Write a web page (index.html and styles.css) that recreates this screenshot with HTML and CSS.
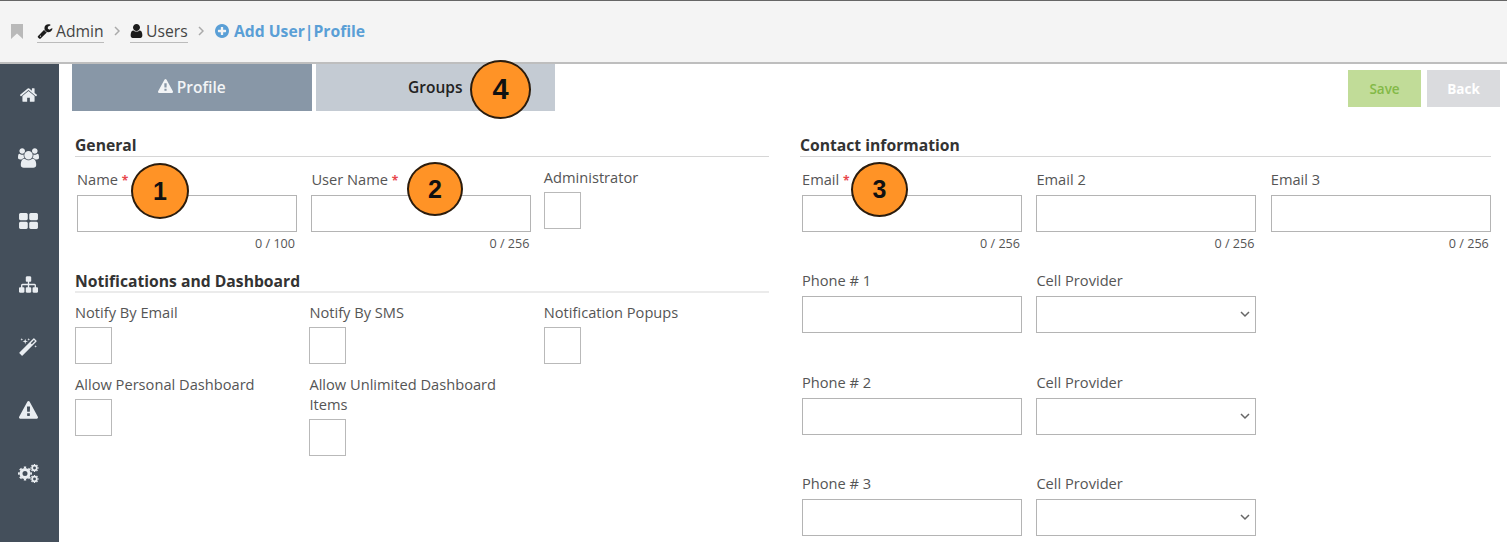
FILE: index.html
```html
<!DOCTYPE html>
<html lang="en">
<head>
<meta charset="utf-8">
<title>Add User | Profile</title>
<link rel="stylesheet" href="styles.css">
</head>
<body>
<svg class="sprite" aria-hidden="true">
  <symbol id="warning" viewBox="0 0 1792 1792"><path d="M1024 1375v-190q0-14-9.5-23.5t-22.5-9.5h-192q-13 0-22.5 9.5t-9.5 23.5v190q0 14 9.5 23.5t22.5 9.5h192q13 0 22.5-9.5t9.5-23.5zm-2-374l18-459q0-12-10-19-13-11-24-11h-220q-11 0-24 11-10 7-10 21l17 457q0 10 10 16.5t24 6.5h185q14 0 23.5-6.5t10.5-16.5zm-14-934l768 1408q35 63-2 126-17 29-46.5 46t-63.5 17h-1536q-34 0-63.5-17t-46.5-46q-37-63-2-126l768-1408q17-31 47-49t65-18 65 18 47 49z"/></symbol>
</svg>
<div class="page">
  <header class="topbar">
    <svg class="bookmark" viewBox="0 0 12 15"><path d="M0 0h12v15l-6-5.500-6 5.500z"/></svg>
    <a class="crumb crumb-admin"><svg class="ico" viewBox="0 0 1792 1792"><path d="M448 1472q0-26-19-45t-45-19-45 19-19 45 19 45 45 19 45-19 19-45zm644-420l-682 682q-37 37-90 37-52 0-91-37l-106-108q-38-36-38-90 0-53 38-91l681-681q39 98 114.500 173.500t173.500 114.500zm634-435q0 39-23 106-47 134-164.500 217.500t-258.500 83.500q-185 0-316.500-131.500t-131.500-316.500 131.500-316.500 316.500-131.500q58 0 121.500 16.500t107.500 46.500q16 11 16 28t-16 28l-293 169v224l193 107q5-3 79-48.500t135.500-81 70.500-35.500q15 0 23.500 10t8.500 25z"/></svg><span>Admin</span></a>
    <svg class="sep" viewBox="0 0 6 10"><path d="M1 1l4 4-4 4"/></svg>
    <a class="crumb crumb-users"><svg class="ico" viewBox="192 128 1408 1536"><path d="M1536 1399q0 109-62.500 187t-150.500 78h-854q-88 0-150.500-78t-62.500-187q0-85 8.500-160.500t31.500-152 58.500-131 94-89 134.500-34.500q131 128 313 128t313-128q76 0 134.500 34.500t94 89 58.500 131 31.500 152 8.500 160.500zm-256-887q0 159-112.500 271.500t-271.500 112.500-271.500-112.500-112.500-271.500 112.500-271.500 271.500-112.500 271.500 112.500 112.500 271.500z"/></svg><span>Users</span></a>
    <svg class="sep" viewBox="0 0 6 10"><path d="M1 1l4 4-4 4"/></svg>
    <span class="current"><svg class="ico" viewBox="128 128 1536 1536"><path d="M1344 960v-128q0-26-19-45t-45-19h-256v-256q0-26-19-45t-45-19h-128q-26 0-45 19t-19 45v256h-256q-26 0-45 19t-19 45v128q0 26 19 45t45 19h256v256q0 26 19 45t45 19h128q26 0 45-19t19-45v-256h256q26 0 45-19t19-45zm320-64q0 209-103 385.500t-279.500 279.500-385.500 103-385.500-103-279.500-279.500-103-385.500 103-385.500 279.500-279.500 385.500-103 385.500 103 279.500 279.500 103 385.500z"/></svg><span>Add User|Profile</span></span>
  </header>
  <div class="body">
    <nav class="side">
      <a><svg class="i-home" viewBox="90 240 1612 1300"><path d="M1472 992v480q0 26-19 45t-45 19h-384v-384h-256v384h-384q-26 0-45-19t-19-45v-480q0-1 .5-3t.5-3l575-474 575 474q1 2 1 6zm223-69l-62 74q-8 9-21 11h-3q-13 0-21-7l-692-577-692 577q-12 8-24 7-13-2-21-11l-62-74q-8-10-7-23.500t11-21.500l719-599q32-26 76-26t76 26l244 204v-195q0-14 9-23t23-9h192q14 0 23 9t9 23v408l219 182q10 8 11 21.500t-7 23.500z"/></svg></a>
      <a><svg class="i-users" viewBox="0 0 1920 1792"><path d="M593 896q-162 5-265 128h-134q-82 0-138-40.500t-56-118.500q0-353 124-353 6 0 43.500 21t97.500 42.500 119 21.500q67 0 133-23-5 37-5 66 0 139 81 256zm1071 637q0 120-73 189.500t-194 69.500h-874q-121 0-194-69.500t-73-189.500q0-53 3.500-103.500t14-109 26.500-108.500 43-97.500 62-81 85.500-53.500 111.500-20q10 0 43 21.500t73 48 107 48 135 21.500 135-21.500 107-48 73-48 43-21.500q61 0 111.500 20t85.500 53.500 62 81 43 97.500 26.500 108.500 14 109 3.500 103.500zm-1024-1277q0 106-75 181t-181 75-181-75-75-181 75-181 181-75 181 75 75 181zm704 384q0 159-112.500 271.500t-271.500 112.500-271.500-112.500-112.500-271.500 112.500-271.500 271.500-112.500 271.500 112.500 112.500 271.500zm576 225q0 78-56 118.500t-138 40.500h-134q-103-123-265-128 81-117 81-256 0-29-5-66 66 23 133 23 59 0 119-21.500t97.500-42.500 43.500-21q124 0 124 353zm-128-609q0 106-75 181t-181 75-181-75-75-181 75-181 181-75 181 75 75 181z"/></svg></a>
      <a><svg class="i-grid" viewBox="64 128 1664 1408"><path d="M832 1024v384q0 52-38 90t-90 38h-512q-52 0-90-38t-38-90v-384q0-52 38-90t90-38h512q52 0 90 38t38 90zm0-768v384q0 52-38 90t-90 38h-512q-52 0-90-38t-38-90v-384q0-52 38-90t90-38h512q52 0 90 38t38 90zm896 768v384q0 52-38 90t-90 38h-512q-52 0-90-38t-38-90v-384q0-52 38-90t90-38h512q52 0 90 38t38 90zm0-768v384q0 52-38 90t-90 38h-512q-52 0-90-38t-38-90v-384q0-52 38-90t90-38h512q52 0 90 38t38 90z"/></svg></a>
      <a><svg class="i-map" viewBox="0 128 1792 1536"><path d="M1792 1248v320q0 40-28 68t-68 28h-320q-40 0-68-28t-28-68v-320q0-40 28-68t68-28h96v-192h-512v192h96q40 0 68 28t28 68v320q0 40-28 68t-68 28h-320q-40 0-68-28t-28-68v-320q0-40 28-68t68-28h96v-192h-512v192h96q40 0 68 28t28 68v320q0 40-28 68t-68 28h-320q-40 0-68-28t-28-68v-320q0-40 28-68t68-28h96v-192q0-52 38-90t90-38h512v-192h-96q-40 0-68-28t-28-68v-320q0-40 28-68t68-28h320q40 0 68 28t28 68v320q0 40-28 68t-68 28h-96v192h512q52 0 90 38t38 90v192h96q40 0 68 28t28 68z"/></svg></a>
      <a><svg class="i-magic" viewBox="64 0 1664 1664"><path d="M1254 581l293-293-107-107-293 293zm447-293q0 27-18 45l-1286 1286q-18 18-45 18t-45-18l-198-198q-18-18-18-45t18-45l1286-1286q18-18 45-18t45 18l198 198q18 18 18 45zm-1351-190l98 30-98 30-30 98-30-98-98-30 98-30 30-98zm350 162l196 60-196 60-60 196-60-196-196-60 196-60 60-196zm930 478l98 30-98 30-30 98-30-98-98-30 98-30 30-98zm-640-640l98 30-98 30-30 98-30-98-98-30 98-30 30-98z"/></svg></a>
      <a><svg class="i-warn"><use href="#warning"/></svg></a>
      <a><svg class="i-cogs" viewBox="0 0 21 19">
        <g class="gear"><circle cx="7" cy="9.500" r="4" stroke-width="3"/><circle cx="7" cy="9.500" r="6.100" stroke-width="1.800" pathLength="80" stroke-dasharray="5 5" stroke-dashoffset="2.500"/>
        <circle cx="16.500" cy="4" r="2.300" stroke-width="1.700"/><circle cx="16.500" cy="4" r="3.500" stroke-width="1.200" pathLength="80" stroke-dasharray="5 5" stroke-dashoffset="2.500"/>
        <circle cx="16.500" cy="15" r="2.300" stroke-width="1.700"/><circle cx="16.500" cy="15" r="3.500" stroke-width="1.200" pathLength="80" stroke-dasharray="5 5" stroke-dashoffset="2.500"/></g></svg></a>
    </nav>
    <main class="main">
      <div class="bar">
        <div class="tabs">
          <div class="tab active"><svg class="i-tab"><use href="#warning"/></svg><span>Profile</span></div>
          <div class="tab">Groups</div>
        </div>
        <div class="actions"><button class="btn save">Save</button><button class="btn back">Back</button></div>
      </div>
      <div class="columns">
        <div class="left">
          <section class="general">
            <h2>General</h2>
            <div class="grid">
              <div class="field"><label>Name <b>*</b></label><div class="input"></div><small>0 / 100</small></div>
              <div class="field"><label>User Name <b>*</b></label><div class="input"></div><small>0 / 256</small></div>
              <div class="check"><label>Administrator</label><div class="box"></div></div>
            </div>
          </section>
          <section class="notify">
            <h2>Notifications and Dashboard</h2>
            <div class="grid">
              <div class="check"><label>Notify By Email</label><div class="box"></div></div>
              <div class="check"><label>Notify By SMS</label><div class="box"></div></div>
              <div class="check"><label>Notification Popups</label><div class="box"></div></div>
              <div class="check"><label>Allow Personal Dashboard</label><div class="box"></div></div>
              <div class="check"><label>Allow Unlimited Dashboard Items</label><div class="box"></div></div>
            </div>
          </section>
        </div>
        <section class="contact">
          <h2>Contact information</h2>
          <div class="grid">
            <div class="field"><label>Email <b>*</b></label><div class="input"></div><small>0 / 256</small></div>
            <div class="field"><label>Email 2</label><div class="input"></div><small>0 / 256</small></div>
            <div class="field"><label>Email 3</label><div class="input"></div><small>0 / 256</small></div>
          </div>
          <div class="grid phones">
            <div class="field"><label>Phone # 1</label><div class="input"></div></div>
            <div class="field"><label>Cell Provider</label><div class="input select"><svg viewBox="0 0 10 7"><path d="M1 1l4 4 4-4"/></svg></div></div>
          </div>
          <div class="grid phones">
            <div class="field"><label>Phone # 2</label><div class="input"></div></div>
            <div class="field"><label>Cell Provider</label><div class="input select"><svg viewBox="0 0 10 7"><path d="M1 1l4 4 4-4"/></svg></div></div>
          </div>
          <div class="grid phones">
            <div class="field"><label>Phone # 3</label><div class="input"></div></div>
            <div class="field"><label>Cell Provider</label><div class="input select"><svg viewBox="0 0 10 7"><path d="M1 1l4 4 4-4"/></svg></div></div>
          </div>
        </section>
      </div>
    </main>
  </div>
  <div class="pin pin1">1</div>
  <div class="pin pin2">2</div>
  <div class="pin pin3">3</div>
  <div class="pin pin4">4</div>
</div>
</body>
</html>
```
FILE: styles.css
```css
* { box-sizing: border-box; }
body { margin: 0; background: #fff; font-family: "Open Sans", "Noto Sans", sans-serif; color: #555; font-size: 14px; overflow: hidden; }
.sprite { display: none; }
svg { display: block; fill: currentColor; flex: none; }
.page { position: relative; width: 1507px; height: 542px; display: flex; flex-direction: column; overflow: hidden; }
.topbar { height: 64px; flex: none; background: #f4f4f4; border-top: 1px solid #666; border-bottom: 2px solid #bebebe; display: flex; align-items: center; padding: 0 0 2px 11px; font-size: 15.700px; }
.bookmark { width: 12px; height: 15px; color: #b9b9b9; margin: 2px 14px 0 0; }
.crumb { display: flex; align-items: center; height: 23px; border-bottom: 1px solid #bbb; color: #444; margin-top: 2px; }
.crumb .ico { color: #1c1c1c; }
.crumb-admin { width: 67px; }
.crumb-admin .ico { width: 16px; height: 16px; margin-right: 3px; }
.crumb-users { width: 58px; }
.crumb-users .ico { width: 13px; height: 14px; margin-right: 3px; }
.sep { width: 6px; height: 10px; margin: 0 10px 0 10px; fill: none; stroke: #aaa; stroke-width: 1.500; }
.current { display: flex; align-items: center; color: #5a9fd6; font-weight: 700; }
.current .ico { width: 14px; height: 14px; margin-right: 5px; }
.crumb-users + .sep { margin-right: 11px; }
.body { flex: 1; display: flex; min-height: 0; }
.side { width: 59px; flex: none; background: #444f5b; color: #e9edf1; display: flex; flex-direction: column; }
.side a { height: 63px; flex: none; display: flex; align-items: center; justify-content: center; padding: 0 3px 1px 0; }
.i-home { width: 17px; height: 14px; }
.i-users { width: 21px; height: 20px; }
.i-grid { width: 19px; height: 16px; }
.i-map { width: 19px; height: 17px; }
.i-magic { width: 18px; height: 18px; }
.i-warn { width: 19px; height: 19px; }
.i-cogs { width: 21px; height: 19px; }
.gear { fill: none; stroke: currentColor; }
.main { flex: 1; min-width: 0; padding-left: 13px; }
.bar { display: flex; justify-content: space-between; height: 70px; }
.tabs { display: flex; gap: 4px; }
.tab { width: 239.500px; height: 47px; background: #c4cbd3; color: #222; font-weight: 600; font-size: 15.500px; display: flex; align-items: center; justify-content: center; padding-bottom: 2px; }
.tab.active { background: #8897a7; color: #f2f4f6; }
.i-tab { width: 15px; height: 15px; margin-right: 4px; }
.actions { display: flex; gap: 6px; padding: 6px 7px 0 0; }
.btn { width: 73px; height: 37px; border: 0; padding: 0; font: 600 13.500px "Open Sans", sans-serif; }
.save { background: #c1dc98; color: #83b947; }
.back { background: #dadbde; color: #fff; font-weight: 700; }
.columns { display: flex; padding-left: 3px; gap: 31px; }
.left { width: 694px; }
.contact { width: 691px; }
h2 { margin: 0; font-size: 15.700px; line-height: 23px; height: 23px; font-weight: 700; color: #333; border-bottom: 1px solid #d6d6d6; white-space: nowrap; }
.grid { display: grid; grid-template-columns: repeat(3, 234.400px); align-items: start; }
.general { height: 135px; }
.general .grid, .contact h2 + .grid { padding-top: 13px; }
.general .check { margin-top: -2px; }
.notify h2 { border-bottom: 2px solid #ebebeb; height: 24px; line-height: 24px; }
.notify .grid { padding-top: 10px; row-gap: 11px; }
label { display: block; line-height: 20px; font-size: 14.650px; }
label b { display: inline-block; color: #e8474c; font-weight: 700; font-size: 12px; line-height: 16px; }
.field { width: 222px; padding-left: 2px; }
.field label { height: 20px; margin: -1px 0 6px; }
.input { height: 37px; border: 1px solid #b4b4b4; background: #fff; }
.select { display: flex; align-items: center; justify-content: flex-end; padding-right: 5px; }
.select svg { width: 10px; height: 7px; fill: none; stroke: #666; stroke-width: 1.500; }
small { display: block; text-align: right; padding-right: 2px; font-size: 12.600px; line-height: 16px; margin-top: 4px; }
.check { width: 210px; }
.check label { margin: -1px 0 5px; }
.box { width: 37px; height: 37px; border: 1px solid #b9b9b9; background: #fff; }
.contact h2 + .grid { height: 114px; }
.phones { height: 101.500px; }
.pin { position: absolute; background: #ff9326; border: 2px solid #2b1c0d; border-radius: 50%; color: #111; font: 700 25px "Liberation Sans", sans-serif; display: flex; align-items: center; justify-content: center; }
.pin1 { left: 131px; top: 163px; width: 58px; height: 56px; }
.pin2 { left: 407px; top: 162px; width: 56px; height: 54px; }
.pin3 { left: 851px; top: 162px; width: 57px; height: 55px; }
.pin4 { left: 470px; top: 60px; width: 61px; height: 59px; font-size: 29px; }
```
